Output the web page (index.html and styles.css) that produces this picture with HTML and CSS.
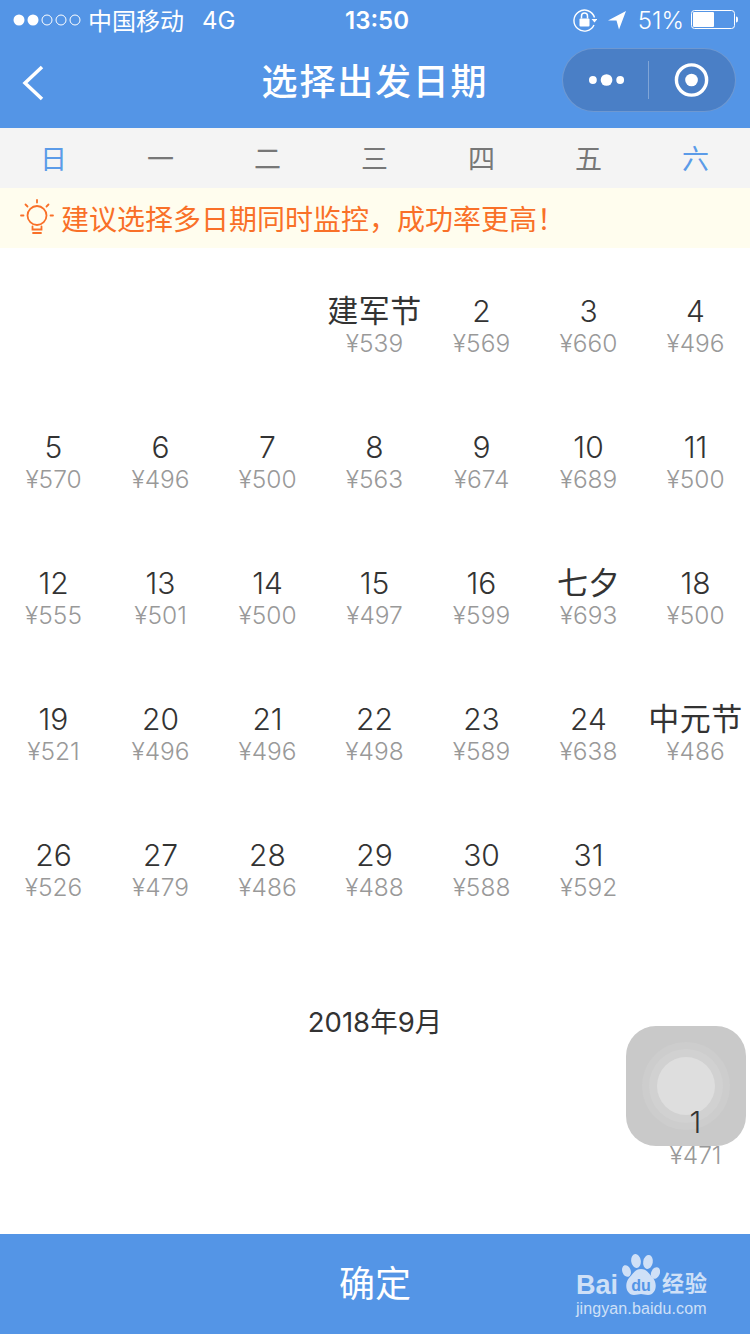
FILE: index.html
```html
<!DOCTYPE html>
<html lang="zh">
<head>
<meta charset="utf-8">
<title>选择出发日期</title>
<link rel="stylesheet" href="styles.css">
</head>
<body>
<div class="page">
  <header class="header">
    <div class="status">
      <div class="status-left">
        <svg class="signal" width="68" height="14" viewBox="0 0 68 14"><circle cx="6" cy="7" r="5.5" fill="#fff"/><circle cx="20" cy="7" r="5.5" fill="#fff"/><circle cx="34" cy="7" r="5" fill="none" stroke="#fff"/><circle cx="48" cy="7" r="5" fill="none" stroke="#fff"/><circle cx="62" cy="7" r="5" fill="none" stroke="#fff"/></svg>
        <span class="carrier">中国移动</span>
        <span class="net">4G</span>
      </div>
      <div class="time">13:50</div>
      <div class="status-right">
        <svg width="24" height="24" viewBox="0 0 24 24"><path d="M21.5 9.5A10.5 10.5 0 1 0 21 17" fill="none" stroke="#fff" stroke-width="1.4"/><path d="M18.5 11h6l-3 3.5z" fill="#fff"/><rect x="6.5" y="10.5" width="10" height="8" rx="1" fill="#fff"/><path d="M8.500 10.500V8a3 3 0 0 1 6 0v2.500" fill="none" stroke="#fff" stroke-width="1.500"/></svg>
        <svg class="loc" width="20" height="20" viewBox="0 0 20 20"><path d="M19 1 1 10.500h8.500L12 19.500z" fill="#fff"/></svg>
        <span class="batt-text">51%</span>
        <svg class="batt" width="47" height="20" viewBox="0 0 47 20"><rect x=".5" y=".5" width="43" height="18" rx="3" fill="none" stroke="#fff"/><rect x="2" y="2" width="21" height="15" rx="1" fill="#fff"/><path d="M45 6.500c1.500 0 2 1 2 3s-.5 3-2 3z" fill="#fff"/></svg>
      </div>
    </div>
    <nav class="nav">
      <svg class="back" width="24" height="38" viewBox="0 0 24 38"><path d="M21 3 4 19 21 35" fill="none" stroke="#fff" stroke-width="3.500"/></svg>
      <h1 class="title">选择出发日期</h1>
      <div class="capsule">
        <svg class="cap-dots" width="40" height="14" viewBox="0 0 40 14"><circle cx="4" cy="7" r="4" fill="#fff"/><circle cx="18" cy="7" r="6" fill="#fff"/><circle cx="32" cy="7" r="4" fill="#fff"/></svg>
        <span class="divider"></span>
        <svg class="cap-target" width="36" height="36" viewBox="0 0 36 36"><circle cx="18" cy="18" r="15.500" fill="none" stroke="#fff" stroke-width="3.500"/><circle cx="18" cy="18" r="6.500" fill="#fff"/></svg>
      </div>
    </nav>
  </header>

  <div class="weekdays">
    <span class="wk accent">日</span><span class="wk">一</span><span class="wk">二</span><span class="wk">三</span><span class="wk">四</span><span class="wk">五</span><span class="wk accent">六</span>
  </div>

  <div class="tip">
    <svg width="36" height="38" viewBox="0 0 36 38"><g fill="none" stroke="#f97028" stroke-width="1.800" stroke-linecap="round"><circle cx="17" cy="16.500" r="9.500"/><path d="M17 1v2.500M5.500 5.500l2 2M28.500 5.500l-2 2M1 16.500h2.500M30.500 16.500H33"/><path d="M12.500 27.500v3h9v-3M13 34h8"/></g></svg>
    <span>建议选择多日期同时监控&#xFF0C;成功率更高&#xFF01;</span>
  </div>

  <main class="cal">
    <div class="assist"><span class="ring"></span></div>
    <div class="grid">
      <div class="cell"></div><div class="cell"></div><div class="cell"></div>
      <div class="cell"><div class="n hol">建军节</div><div class="p">¥539</div></div>
      <div class="cell"><div class="n">2</div><div class="p">¥569</div></div>
      <div class="cell"><div class="n">3</div><div class="p">¥660</div></div>
      <div class="cell"><div class="n">4</div><div class="p">¥496</div></div>
      <div class="cell"><div class="n">5</div><div class="p">¥570</div></div>
      <div class="cell"><div class="n">6</div><div class="p">¥496</div></div>
      <div class="cell"><div class="n">7</div><div class="p">¥500</div></div>
      <div class="cell"><div class="n">8</div><div class="p">¥563</div></div>
      <div class="cell"><div class="n">9</div><div class="p">¥674</div></div>
      <div class="cell"><div class="n">10</div><div class="p">¥689</div></div>
      <div class="cell"><div class="n">11</div><div class="p">¥500</div></div>
      <div class="cell"><div class="n">12</div><div class="p">¥555</div></div>
      <div class="cell"><div class="n">13</div><div class="p">¥501</div></div>
      <div class="cell"><div class="n">14</div><div class="p">¥500</div></div>
      <div class="cell"><div class="n">15</div><div class="p">¥497</div></div>
      <div class="cell"><div class="n">16</div><div class="p">¥599</div></div>
      <div class="cell"><div class="n hol">七夕</div><div class="p">¥693</div></div>
      <div class="cell"><div class="n">18</div><div class="p">¥500</div></div>
      <div class="cell"><div class="n">19</div><div class="p">¥521</div></div>
      <div class="cell"><div class="n">20</div><div class="p">¥496</div></div>
      <div class="cell"><div class="n">21</div><div class="p">¥496</div></div>
      <div class="cell"><div class="n">22</div><div class="p">¥498</div></div>
      <div class="cell"><div class="n">23</div><div class="p">¥589</div></div>
      <div class="cell"><div class="n">24</div><div class="p">¥638</div></div>
      <div class="cell"><div class="n hol">中元节</div><div class="p">¥486</div></div>
      <div class="cell"><div class="n">26</div><div class="p">¥526</div></div>
      <div class="cell"><div class="n">27</div><div class="p">¥479</div></div>
      <div class="cell"><div class="n">28</div><div class="p">¥486</div></div>
      <div class="cell"><div class="n">29</div><div class="p">¥488</div></div>
      <div class="cell"><div class="n">30</div><div class="p">¥588</div></div>
      <div class="cell"><div class="n">31</div><div class="p">¥592</div></div>
    </div>
    <h2 class="month">2018年9月</h2>
    <div class="grid sep">
      <div class="cell"></div><div class="cell"></div><div class="cell"></div><div class="cell"></div><div class="cell"></div><div class="cell"></div>
      <div class="cell"><div class="n">1</div><div class="p">¥471</div></div>
    </div>
  </main>

  <footer class="footer">
    <span class="ok">确定</span>
    <div class="mark">
      <div class="mark-top">
        <span class="bai">Bai</span>
        <svg class="paw" width="38" height="42" viewBox="0 0 38 42"><g fill="#cfe0f7"><ellipse cx="4.500" cy="17" rx="4.200" ry="6" transform="rotate(-20 4.500 17)"/><ellipse cx="14" cy="7" rx="4.800" ry="7" transform="rotate(-8 14 7)"/><ellipse cx="26" cy="8" rx="4.800" ry="7" transform="rotate(10 26 8)"/><ellipse cx="33.500" cy="19" rx="4.300" ry="6" transform="rotate(25 33.500 19)"/><path d="M19 15c6 0 8 5 12 9 5 6 3 17-5 17-3 0-5-1-7-1s-4 1-7 1c-8 0-10-11-5-17 4-4 6-9 12-9z"/></g><text x="19" y="37" text-anchor="middle" class="du">du</text></svg>
        <span class="jy">经验</span>
      </div>
      <div class="mark-url">jingyan.baidu.com</div>
    </div>
  </footer>
</div>
</body>
</html>
```
FILE: styles.css
```css
* { box-sizing: border-box; margin: 0; padding: 0; }
html, body { width: 750px; height: 1334px; overflow: hidden; background: #fff; }
body { font-family: Inter, "Noto Sans CJK SC", sans-serif; }
.page { width: 750px; height: 1334px; display: flex; flex-direction: column; }

.header { background: #5495e6; color: #fff; height: 128px; flex: none; }
.status { height: 40px; padding: 0 12px 0 13px; display: grid; grid-template-columns: 1fr auto 1fr; align-items: center; font-size: 24px; }
.status-left { display: flex; align-items: center; }
.carrier { margin-left: 7px; margin-bottom: 2px; }
.net { margin-left: 18px; }
.time { font-size: 24px; font-weight: 600; margin-left: 3px; }
.status-right { display: flex; align-items: center; justify-content: flex-end; }
.loc { margin-left: 10px; }
.batt-text { margin-left: 11px; font-weight: 300; }
.batt { margin-left: 7px; }

.nav { height: 88px; position: relative; display: flex; align-items: center; justify-content: space-between; padding: 0 14px 0 21px; }
.back { margin-top: -2px; }
.title { position: absolute; left: 0; right: 0; top: -2px; text-align: center; font-size: 36px; font-weight: 500; letter-spacing: 1.800px; line-height: 88px; }
.capsule { position: relative; width: 174px; height: 64px; margin-top: -8px; border: 1px solid rgba(255,255,255,.2); border-radius: 32px; background: #4a7fc6; display: flex; align-items: center; padding: 0 26px; }
.divider { width: 1px; height: 38px; background: rgba(255,255,255,.3); margin-left: 20px; }
.cap-target { margin-left: 25px; }

.weekdays { height: 60px; flex: none; padding-bottom: 2px; background: #f4f4f4; display: grid; grid-template-columns: repeat(7, 107px); align-items: center; text-align: center; font-size: 27px; color: #777; }
.accent { color: #5b9be8; }

.tip { height: 60px; flex: none; background: #fffdee; color: #f97028; display: flex; align-items: center; padding-left: 20px; font-size: 28px; gap: 5px; }

.cal { flex: 1; position: relative; overflow: hidden; padding-top: 43px; }
.assist { position: absolute; left: 626px; top: 778px; width: 120px; height: 120px; border-radius: 30px; background: #c9c9c9; display: flex; align-items: center; justify-content: center; }
.ring { width: 58px; height: 58px; border-radius: 50%; background: #dedede; box-shadow: 0 0 0 8px #d1d1d1, 0 0 0 15px #cdcdcd; }

.grid { position: relative; display: grid; grid-template-columns: repeat(7, 107px); grid-auto-rows: 136px; text-align: center; }
.n { font-size: 30px; font-weight: 350; line-height: 40px; color: #333; }
.hol { font-size: 31px; font-weight: 400; letter-spacing: .500px; white-space: nowrap; }
.p { font-size: 24.500px; font-weight: 300; line-height: 25px; color: #999; }
.month { position: relative; height: 100px; margin-top: 1px; font-size: 27.500px; font-weight: 400; color: #333; line-height: 100px; text-align: center; }
.sep { margin-top: 30px; }
.sep .p { margin-top: 1px; }

.footer { height: 100px; flex: none; padding-bottom: 6px; background: #5495e6; color: #fff; position: relative; display: flex; align-items: center; justify-content: center; }
.ok { font-size: 36px; }
.mark { position: absolute; right: 42px; top: 20px; color: #cfe0f7; }
.mark-top { display: flex; align-items: flex-end; height: 42px; }
.bai { font-family: "Liberation Sans", sans-serif; font-size: 27px; font-weight: 700; line-height: 28px; margin-bottom: -3px; margin-right: 4px; }
.du { font-family: "Liberation Sans", sans-serif; font-size: 16px; font-weight: 700; fill: #5495e6; }
.jy { font-size: 22px; font-weight: 700; line-height: 26px; margin-left: 2px; letter-spacing: 1px; }
.mark-url { font-family: "Liberation Sans", sans-serif; font-size: 16px; line-height: 20px; letter-spacing: .100px; margin-top: 3px; }
```
